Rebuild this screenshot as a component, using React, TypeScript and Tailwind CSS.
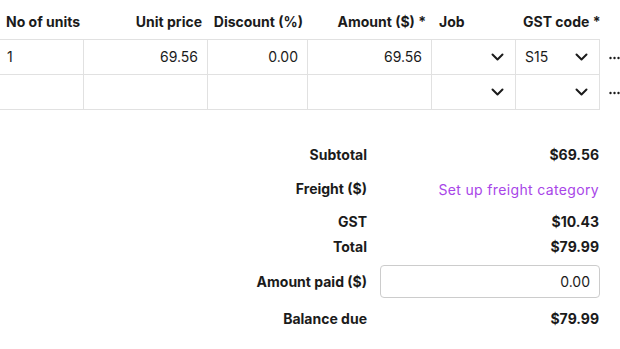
import React from 'react';

const font = { fontFamily: 'Inter, "Noto Sans", sans-serif' };

function Chevron() {
  return (
    <svg width="13" height="8" viewBox="0 0 13 8" fill="none">
      <path d="M1.5 1.5l5 5 5-5" stroke="#1b1b1b" strokeWidth="2" strokeLinecap="round" strokeLinejoin="round" />
    </svg>
  );
}

function Dots() {
  return (
    <svg width="11" height="4" viewBox="0 0 11 4" fill="#1b1b1b">
      <circle cx="1.5" cy="2" r="1.2" />
      <circle cx="5.5" cy="2" r="1.2" />
      <circle cx="9.5" cy="2" r="1.2" />
    </svg>
  );
}

const cols = 'grid grid-cols-[84px_124px_100px_124px_84px_84px_20px]';
const cell = 'h-[35px] border-r border-b border-[#e1e1e1] flex items-center';

function LineRow({ units, price, discount, amount, gst }: { units?: string; price?: string; discount?: string; amount?: string; gst?: string }) {
  return (
    <div className={cols}>
      <div className={`${cell} pl-[7px]`}>{units}</div>
      <div className={`${cell} justify-end pr-[9px]`}>{price}</div>
      <div className={`${cell} justify-end pr-[9px]`}>{discount}</div>
      <div className={`${cell} justify-end pr-[9px]`}>{amount}</div>
      <div className={`${cell} justify-end pr-[11px]`}>
        <Chevron />
      </div>
      <div className={`${cell} justify-between pl-[9px] pr-[11px]`}>
        <span>{gst}</span>
        <Chevron />
      </div>
      <div className="h-[35px] flex items-center pl-[9px]">
        <Dots />
      </div>
    </div>
  );
}

export default function App() {
  return (
    <div className="w-[620px] h-[349px] bg-white text-[14px] leading-5 text-[#1b1b1b] overflow-hidden" style={font}>
      <div className={`${cols} h-[40px] pt-[12px] font-bold border-b border-[#e1e1e1] w-[600px]`}>
        <div className="pl-[6px] whitespace-nowrap">No of units</div>
        <div className="text-right pr-[6px] whitespace-nowrap">Unit price</div>
        <div className="text-right pr-[5px] whitespace-nowrap">Discount (%)</div>
        <div className="text-right pr-[6px] whitespace-nowrap">Amount ($) *</div>
        <div className="pl-[7px]">Job</div>
        <div className="pl-[7px] whitespace-nowrap">GST code *</div>
      </div>
      <LineRow units="1" price="69.56" discount="0.00" amount="69.56" gst="S15" />
      <LineRow />

      <div className="w-[600px] grid grid-cols-[1fr_220px] gap-x-[13px] mt-[35px]">
        <div className="text-right font-bold">Subtotal</div>
        <div className="text-right font-bold pr-px">$69.56</div>

        <div className="text-right font-bold mt-[14px]">Freight ($)</div>
        <div className="text-right text-[#a845e8] tracking-[0.35px] mt-[15px] pr-px">Set up freight category</div>

        <div className="text-right font-bold mt-[12px]">GST</div>
        <div className="text-right font-bold mt-[12px] pr-px">$10.43</div>

        <div className="text-right font-bold mt-[5px]">Total</div>
        <div className="text-right font-bold mt-[5px] pr-px">$79.99</div>

        <div className="text-right font-bold mt-[8px] h-[33px] flex items-center justify-end">Amount paid ($)</div>
        <div className="mt-[8px] h-[33px] border border-[#cccccc] rounded-[4px] flex items-center justify-end pr-[9px]">0.00</div>

        <div className="text-right font-bold mt-[11px]">Balance due</div>
        <div className="text-right font-bold mt-[11px] pr-px">$79.99</div>
      </div>
    </div>
  );
}
